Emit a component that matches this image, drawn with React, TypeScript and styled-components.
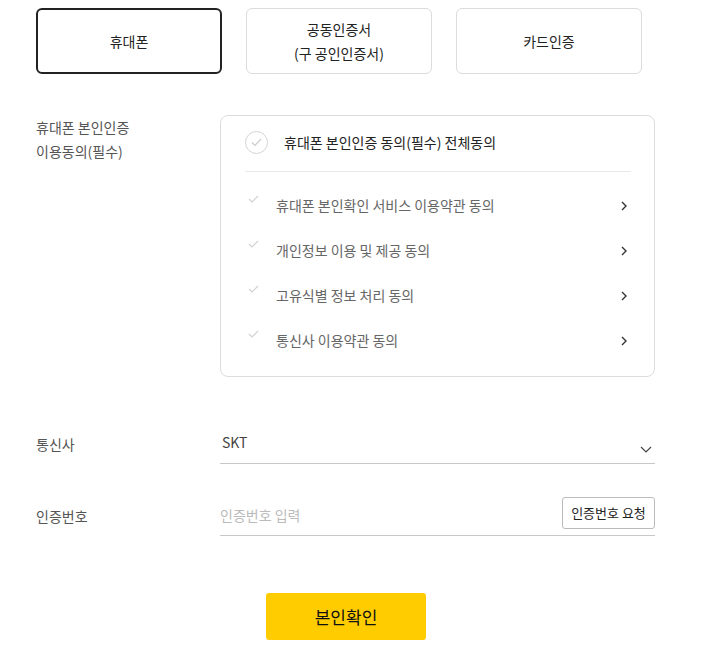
import styled, { createGlobalStyle } from "styled-components";

const GlobalStyle = createGlobalStyle`
  body {
    margin: 0;
    background: #fff;
    font-family: "Noto Sans CJK KR", "Noto Sans", sans-serif;
    color: #333;
  }
`;

const Wrapper = styled.div`
  width: 620px;
  padding: 8px 0 0 36px;
`;

const Tabs = styled.div`
  display: flex;
  gap: 24px;
`;

const Tab = styled.button<{ active?: boolean }>`
  width: 186px;
  height: 66px;
  box-sizing: border-box;
  border: ${(p) => (p.active ? "2px solid #222" : "1px solid #dcdcdc")};
  border-radius: 6px;
  background: #fff;
  font-family: inherit;
  font-size: 14px;
  line-height: 24px;
  color: #222;
  padding: 0;
`;

const Row = styled.div<{ mt: number }>`
  display: flex;
  align-items: center;
  margin-top: ${(p) => p.mt}px;
`;

const TopRow = styled(Row)`
  align-items: flex-start;
`;

const Label = styled.div`
  width: 184px;
  font-size: 14px;
  line-height: 24px;
  color: #555;
  flex-shrink: 0;
`;

const AgreeBox = styled.div`
  width: 435px;
  height: 262px;
  box-sizing: border-box;
  border: 1px solid #dcdcdc;
  border-radius: 8px;
  padding: 0 23px 0 24px;
`;

const AgreeHead = styled.div`
  display: flex;
  align-items: center;
  gap: 16px;
  height: 56px;
  box-sizing: border-box;
  padding-bottom: 3px;
  border-bottom: 1px solid #e8e8e8;
  font-size: 14px;
  color: #222;
`;

const Circle = styled.span`
  width: 23px;
  height: 23px;
  box-sizing: border-box;
  border: 1px solid #d4d4d4;
  border-radius: 50%;
  display: flex;
  align-items: center;
  justify-content: center;
`;

const AgreeList = styled.div`
  padding-top: 10px;
`;

const AgreeItem = styled.div`
  display: flex;
  align-items: center;
  height: 45px;
  font-size: 14px;
  color: #666;
`;

const SmallCheck = styled.span`
  width: 18px;
  margin: -12px 10px 0 3px;
  display: flex;
`;

const ItemText = styled.span`
  flex: 1;
`;

const Chevron = styled.span`
  display: flex;
  margin: 3px 4px 0 0;
`;

const Field = styled.div`
  width: 435px;
  height: 40px;
  box-sizing: border-box;
  border-bottom: 1px solid #c8c8c8;
  display: flex;
  align-items: center;
  font-size: 14px;
`;

const SelectValue = styled.span`
  flex: 1;
  padding-left: 2px;
  margin-top: -4px;
  color: #444;
`;

const DropArrow = styled.span`
  display: flex;
  margin: 12px 3px 0 0;
`;

const Placeholder = styled.span`
  flex: 1;
  margin-top: -2px;
  color: #bbb;
`;

const RequestButton = styled.button`
  width: 93px;
  height: 32px;
  margin-top: -6px;
  box-sizing: border-box;
  border: 1px solid #bbb;
  border-radius: 3px;
  background: #fff;
  font-family: inherit;
  font-size: 13px;
  color: #222;
  padding: 0;
`;

const ConfirmWrap = styled.div`
  display: flex;
  justify-content: center;
  margin-top: 57px;
`;

const ConfirmButton = styled.button`
  width: 160px;
  height: 47px;
  border: none;
  border-radius: 3px;
  background: #ffcc00;
  font-family: inherit;
  font-size: 17px;
  color: #111;
`;

const items = [
  "휴대폰 본인확인 서비스 이용약관 동의",
  "개인정보 이용 및 제공 동의",
  "고유식별 정보 처리 동의",
  "통신사 이용약관 동의",
];

function App() {
  return (
    <Wrapper>
      <GlobalStyle />
      <Tabs>
        <Tab active>휴대폰</Tab>
        <Tab>
          공동인증서
          <br />
          (구 공인인증서)
        </Tab>
        <Tab>카드인증</Tab>
      </Tabs>

      <TopRow mt={41}>
        <Label>
          휴대폰 본인인증
          <br />
          이용동의(필수)
        </Label>
        <AgreeBox>
          <AgreeHead>
            <Circle>
              <svg width="11" height="9" viewBox="0 0 11 9">
                <path d="M1 4.5 L4 7.5 L10 1" fill="none" stroke="#ccc" strokeWidth="1.2" />
              </svg>
            </Circle>
            휴대폰 본인인증 동의(필수) 전체동의
          </AgreeHead>
          <AgreeList>
            {items.map((t) => (
              <AgreeItem key={t}>
                <SmallCheck>
                  <svg width="11" height="8" viewBox="0 0 11 8">
                    <path d="M1 4 L4 7 L10 1" fill="none" stroke="#d0d0d0" strokeWidth="1.1" />
                  </svg>
                </SmallCheck>
                <ItemText>{t}</ItemText>
                <Chevron>
                  <svg width="6" height="10" viewBox="0 0 6 10">
                    <path d="M1 1 L5 5 L1 9" fill="none" stroke="#333" strokeWidth="1.4" />
                  </svg>
                </Chevron>
              </AgreeItem>
            ))}
          </AgreeList>
        </AgreeBox>
      </TopRow>

      <Row mt={47}>
        <Label>통신사</Label>
        <Field>
          <SelectValue>SKT</SelectValue>
          <DropArrow>
            <svg width="12" height="7" viewBox="0 0 12 7">
              <path d="M1 1 L6 6 L11 1" fill="none" stroke="#444" strokeWidth="1.2" />
            </svg>
          </DropArrow>
        </Field>
      </Row>

      <Row mt={32}>
        <Label>인증번호</Label>
        <Field>
          <Placeholder>인증번호 입력</Placeholder>
          <RequestButton>인증번호 요청</RequestButton>
        </Field>
      </Row>

      <ConfirmWrap>
        <ConfirmButton>본인확인</ConfirmButton>
      </ConfirmWrap>
    </Wrapper>
  );
}

export default App;
